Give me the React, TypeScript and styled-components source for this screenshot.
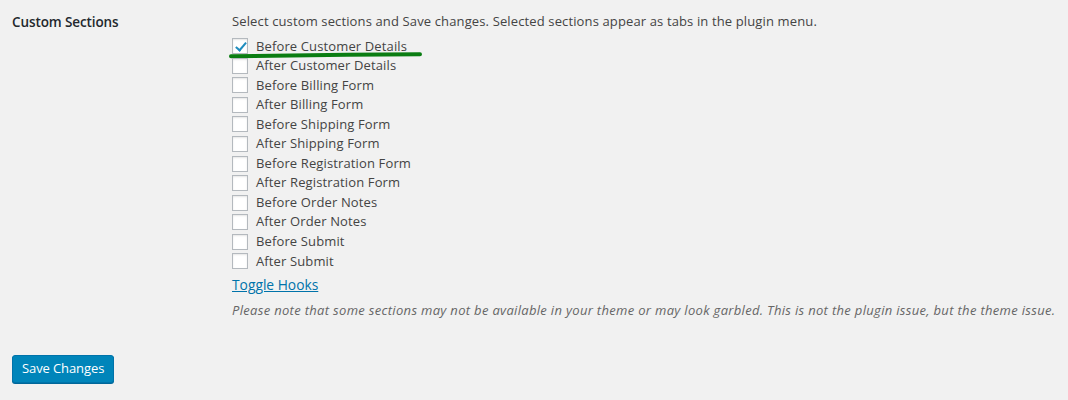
import React from "react"
import styled, { createGlobalStyle } from "styled-components"

const GlobalStyle = createGlobalStyle`
	html, body {
		margin: 0;
		padding: 0;
		background: #f1f1f1;
	}
	body {
		font-family: "Open Sans", "Noto Sans", sans-serif;
		font-size: 13px;
		color: #444;
	}
`

const sections = [
	"Before Customer Details",
	"After Customer Details",
	"Before Billing Form",
	"After Billing Form",
	"Before Shipping Form",
	"After Shipping Form",
	"Before Registration Form",
	"After Registration Form",
	"Before Order Notes",
	"After Order Notes",
	"Before Submit",
	"After Submit",
]

const App: React.FC = () => {
	const [checked, setChecked] = React.useState<string[]>([sections[0]])

	const toggle = (name: string) =>
		setChecked((list) =>
			list.includes(name) ? list.filter((n) => n !== name) : [...list, name]
		)

	return (
		<>
			<GlobalStyle />
			<Page>
				<FormTable>
					<Label>Custom Sections</Label>
					<Field>
						<Description>
							Select custom sections and Save changes. Selected sections appear
							as tabs in the plugin menu.
						</Description>
						<Fieldset>
							{sections.map((name, i) => (
								<CheckRow key={name}>
									<Box
										type="checkbox"
										checked={checked.includes(name)}
										onChange={() => toggle(name)}
									/>
									<span>{name}</span>
									{i === 0 && (
										<Highlight viewBox="0 0 196 8" preserveAspectRatio="none">
											<path
												d="M3 5.2 C 60 4.6, 130 3.6, 192 3.2"
												stroke="#0a7d12"
												strokeWidth="4"
												strokeLinecap="round"
												fill="none"
											/>
										</Highlight>
									)}
								</CheckRow>
							))}
						</Fieldset>
						<ToggleLink href="#">Toggle Hooks</ToggleLink>
						<Note>
							Please note that some sections may not be available in your theme
							or may look garbled. This is not the plugin issue, but the theme
							issue.
						</Note>
					</Field>
				</FormTable>
				<Submit type="button">Save Changes</Submit>
			</Page>
		</>
	)
}

export default App

const Page = styled.div`
	padding: 0 12px;
	width: 1068px;
	height: 400px;
	box-sizing: border-box;
	overflow: hidden;
`

const FormTable = styled.div`
	display: grid;
	grid-template-columns: 220px 1fr;
`

const Label = styled.div`
	padding-top: 13px;
	font-size: 13.5px;
	font-weight: 600;
	letter-spacing: -0.1px;
	color: #23282d;
	line-height: 19.5px;
`

const Field = styled.div`
	padding-top: 12px;
	line-height: 19.5px;
	letter-spacing: 0.13px;
`

const Description = styled.p`
	margin: 0 0 5px;
`

const Fieldset = styled.div`
	display: flex;
	flex-direction: column;
`

const CheckRow = styled.label`
	position: relative;
	display: flex;
	align-items: center;
	height: 19.55px;
	gap: 8px;
	cursor: pointer;
`

const Box = styled.input`
	appearance: none;
	margin: 0;
	width: 16px;
	height: 16px;
	border: 1px solid #b4b9be;
	background: #fff;
	box-shadow: inset 0 1px 2px rgba(0, 0, 0, 0.1);
	box-sizing: border-box;
	position: relative;
	flex: none;
	cursor: pointer;

	&:checked::before {
		content: "";
		position: absolute;
		left: 4.5px;
		top: 0.5px;
		width: 4px;
		height: 9px;
		border: solid #1e8cbe;
		border-width: 0 2.5px 2.5px 0;
		transform: rotate(40deg);
	}
`

const Highlight = styled.svg`
	position: absolute;
	left: -4px;
	top: 14px;
	width: 196px;
	height: 8px;
	pointer-events: none;
`

const ToggleLink = styled.a`
	display: inline-block;
	margin-top: 4px;
	color: #0073aa;
	text-decoration: underline;
	font-size: 13.8px;
	letter-spacing: 0;
`

const Note = styled.p`
	margin: 5px 0 0;
	font-style: italic;
	color: #666;
	letter-spacing: 0.32px;
`

const Submit = styled.button`
	margin-top: 35px;
	height: 28px;
	padding: 0 9px 2px;
	background: #0085ba;
	border: 1px solid #0073aa;
	border-radius: 3px;
	box-shadow: 0 1px 0 #006799;
	color: #fff;
	font-family: inherit;
	font-size: 13px;
	letter-spacing: -0.1px;
	line-height: 24px;
	cursor: pointer;
`
